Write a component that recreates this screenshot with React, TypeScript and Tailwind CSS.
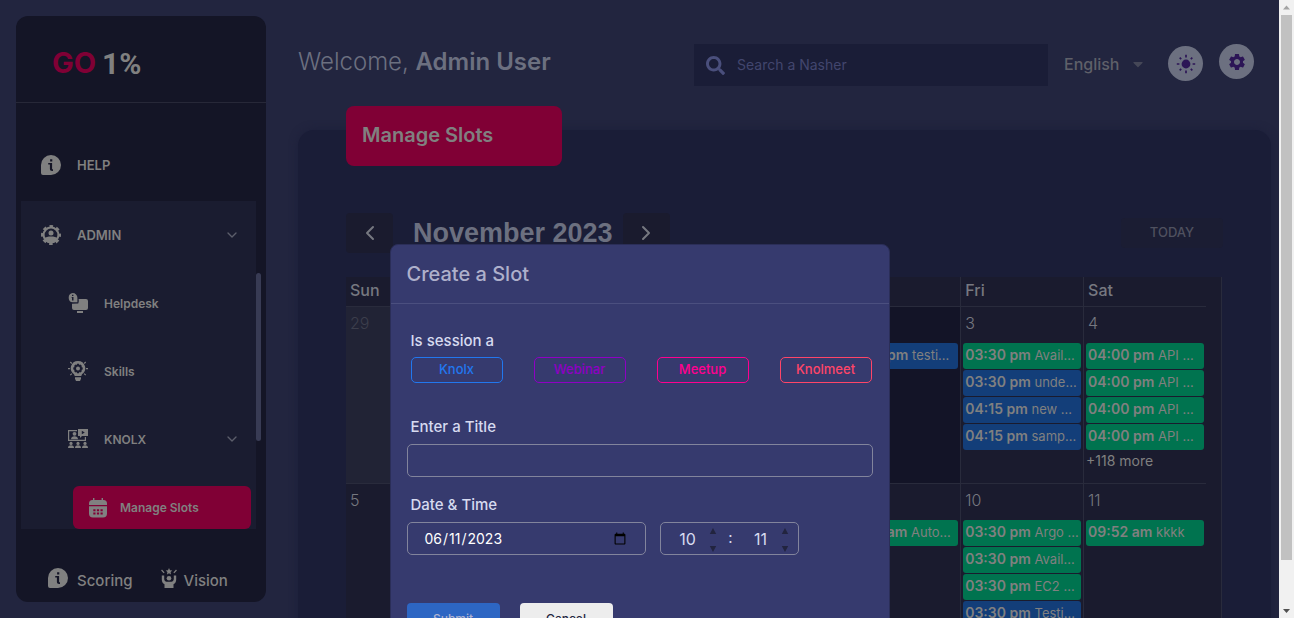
import type { ReactNode } from "react";
import { MdSettings } from "react-icons/md";
import { FaSearch, FaCaretDown } from "react-icons/fa";
import { ChevronDown, ChevronLeft, ChevronRight } from "lucide-react";

/* ---------- icons ---------- */

function InfoIcon() {
  return (
    <svg viewBox="0 0 20 20" className="size-5 shrink-0" fill="currentColor" aria-hidden="true">
      <path
        fillRule="evenodd"
        d="M10 0a10 10 0 1 1 0 20H2a2 2 0 0 1-2-2v-8A10 10 0 0 1 10 0Zm-.9 4.2v2.2h2.2V4.2H9.100Zm-1.900 3.900v1.500h1.700v4.100c0 1.500.8 2.200 2.200 2.200h.9v-1.600h-.4c-.4 0-.5-.2-.5-.6V8.100H7.200Z"
      />
    </svg>
  );
}

function AdminIcon() {
  return (
    <svg viewBox="0 0 20 20" className="size-5 shrink-0" fill="currentColor" aria-hidden="true">
      <circle cx="10" cy="10" r="7.400" fill="none" stroke="currentColor" strokeWidth="2" />
      <circle cx="10" cy="10" r="8.900" fill="none" stroke="currentColor" strokeWidth="2.200" strokeDasharray="3.600 3.390" strokeDashoffset="1.800" />
      <circle cx="10" cy="8" r="2.500" />
      <path d="M3.200 13.400c1.500-1.400 3.800-2 6.800-2s5.300.6 6.800 2c-1 3.200-3.500 4.800-6.800 4.800s-5.800-1.600-6.800-4.800Z" />
    </svg>
  );
}

function HelpdeskIcon() {
  return (
    <svg viewBox="0 0 20 20" className="size-5 shrink-0" fill="currentColor" aria-hidden="true">
      <path d="M10.600 6H18a2 2 0 0 1 2 2v7a2 2 0 0 1-2 2H6a2 2 0 0 1-2-2v-4.200l6.200-.4c.6-1.300.8-2.800.4-4.400Z" />
      <path d="M9 18h6v2H9z" />
      <path
        fillRule="evenodd"
        d="M4.700 0a4.700 4.700 0 0 1 4.700 4.700v4.600H4.700A4.700 4.700 0 0 1 4.700 0ZM4 1.800v1.300h1.400V1.800H4Zm-.4 2.100v.9H4v2.800h1.500V3.900H3.600Z"
      />
    </svg>
  );
}

function SkillsIcon() {
  return (
    <svg viewBox="0 0 20 20" className="size-5 shrink-0" fill="currentColor" aria-hidden="true">
      <path
        fillRule="evenodd"
        d="M10 0a7.200 7.200 0 0 1 4 13.200L13.300 15H6.700L6 13.200A7.200 7.200 0 0 1 10 0Zm-1 2.800-.3 1.300-1.200-.7L6 4.900l.7 1.200-1.400.3v2.200l1.400.3-.7 1.200 1.500 1.500 1.200-.7.300 1.300h2l.3-1.300 1.200.7 1.500-1.500-.7-1.200 1.400-.3V6.400l-1.400-.3.7-1.200-1.500-1.500-1.200.7L11 2.800H9Z"
      />
      <circle cx="10" cy="7.500" r="2" />
      <path d="M7 16.300h6v1.500l-1 2.200H8l-1-2.200z" />
      <path d="M0 7h2v1.200H0zM18 7h2v1.200h-2zM2.700.6l1.500 1.500-.8.800L1.900 1.400zM17.300.6l.8.8-1.500 1.500-.8-.8zM3.400 12.300l.8.800-1.500 1.500-.8-.8zM16.600 12.300l1.500 1.500-.8.800-1.500-1.500z" />
    </svg>
  );
}

function ClassIcon() {
  return (
    <svg viewBox="0 0 20 20" className="size-5 shrink-0" fill="currentColor" aria-hidden="true">
      <path d="M0 1h9v1.200H1.200v8.600h15.600V8H18v4H0z" />
      <path fillRule="evenodd" d="M10 0h10v7h-6l-2 2V7h-2V0Zm3.800 1.700v3.600l3-1.800-3-1.800Z" />
      <circle cx="6.500" cy="4.800" r="1.900" />
      <path d="M3 10.200c0-2 1.500-3 3.500-3s3.500 1 3.500 3z" />
      <circle cx="3" cy="14.400" r="1.600" />
      <circle cx="10" cy="14.400" r="1.600" />
      <circle cx="17" cy="14.400" r="1.600" />
      <path d="M0 19c0-1.900 1-2.800 3-2.800s3 .9 3 2.800zM7 19c0-1.900 1-2.800 3-2.800s3 .9 3 2.800zM14 19c0-1.900 1-2.800 3-2.800s3 .9 3 2.800z" />
    </svg>
  );
}

function CalendarIcon() {
  return (
    <svg viewBox="0 0 18 20" className="h-5 w-[18px] shrink-0" fill="currentColor" aria-hidden="true">
      <path d="M4 0h1.400v2h7.200V0H14v2h.5A3.500 3.500 0 0 1 18 5.500V7H0V5.500A3.500 3.500 0 0 1 3.500 2H4z" />
      <path
        fillRule="evenodd"
        d="M0 8.300h18v7.200a4 4 0 0 1-4 4H4a4 4 0 0 1-4-4V8.300Zm4.300 2.900v2h2.200v-2H4.300Zm3.600 0v2h2.200v-2H7.900Zm3.600 0v2h2.200v-2h-2.200Zm-7.200 3.300v2h2.200v-2H4.300Zm3.600 0v2h2.200v-2H7.900Zm3.600 0v2h2.200v-2h-2.200Z"
      />
    </svg>
  );
}

function VisionIcon() {
  return (
    <svg viewBox="0 0 16 20" className="h-5 w-4 shrink-0" fill="currentColor" aria-hidden="true">
      <path d="m8 0 1 2.200 2.300.3-1.700 1.600.4 2.400-2-1.200-2 1.200.4-2.400-1.700-1.600L7 2.200z" />
      <circle cx="8" cy="10.200" r="2.300" />
      <path d="M.8 7.500h2.400v3.200c0 1.800 1 2.700 2.400 3h4.800c1.400-.3 2.400-1.200 2.400-3V7.500h2.400v4c0 2.400-1 3.800-2.700 4.800V20h-9v-3.700C1.800 15.300.8 13.900.8 11.500z" />
      <path d="M1 1.600 3.600 4.400l-.9.800L.1 2.400zM15 1.600l.9.800-2.600 2.800-.9-.8z" />
    </svg>
  );
}

function SunIcon() {
  return (
    <svg viewBox="0 0 20 20" className="size-5" aria-hidden="true">
      <circle cx="10" cy="10" r="4.400" fill="currentColor" />
      <path
        d="M10 .8v2.600M10 16.600v2.600M.8 10h2.600M16.600 10h2.600M3.700 3.700l1.500 1.500M14.800 14.800l1.500 1.500M16.300 3.700l-1.500 1.500M5.200 14.800l-1.500 1.500"
        stroke="currentColor"
        strokeWidth="1.700"
        fill="none"
      />
    </svg>
  );
}

/* ---------- sidebar ---------- */

type NavRowProps = { icon: ReactNode; label: string; sub?: boolean; expandable?: boolean };

function NavRow({ icon, label, sub, expandable }: NavRowProps) {
  return (
    <a
      href="#"
      className={
        sub
          ? "flex h-[68px] items-center gap-4 pr-4 pl-[47px] text-xs font-semibold"
          : "flex h-[68px] items-center gap-4 pr-4 pl-5 text-[13px] font-semibold"
      }
    >
      {icon}
      <span className="pt-px">{label}</span>
      {expandable && <ChevronDown className="ml-auto size-4 text-[#5c5e6b]" />}
    </a>
  );
}

function Sidebar() {
  return (
    <aside className="m-4 mr-0 flex w-[250px] shrink-0 flex-col rounded-xl bg-[#141526] text-[#808080]">
      <div className="flex h-[87px] items-center gap-[6px] border-b border-[#272838] pt-2 pl-9">
        <span className="text-[29px] font-bold text-[#800035]">GO</span>
        <span className="font-['Roboto',sans-serif] text-[30px] font-bold">1%</span>
      </div>
      <nav className="flex min-h-0 flex-1 flex-col pt-7">
        <div className="pb-[2px] pl-[5px]">
          <NavRow icon={<InfoIcon />} label="HELP" />
        </div>
        <div className="flex h-[328px] pl-[5px]">
          <div className="w-[235px] overflow-hidden bg-[#1a1c30]">
            <NavRow icon={<AdminIcon />} label="ADMIN" expandable />
            <NavRow icon={<HelpdeskIcon />} label="Helpdesk" sub />
            <NavRow icon={<SkillsIcon />} label="Skills" sub />
            <NavRow icon={<ClassIcon />} label="KNOLX" sub expandable />
            <a
              href="#"
              className="mt-[13px] mr-[5px] ml-[52px] flex h-[43px] items-center gap-[13px] rounded-md bg-[#800035] pl-4 text-xs font-semibold"
            >
              <CalendarIcon />
              Manage Slots
            </a>
          </div>
          <div className="mt-[72px] h-[168px] w-[5px] rounded-full bg-[#383b54]" />
        </div>
      </nav>
      <div className="flex h-[73px] items-center gap-7 pt-6 pl-8 text-[15px] font-medium">
        <a href="#" className="flex items-center gap-[9px]">
          <InfoIcon />
          <span className="pt-2">Scoring</span>
        </a>
        <a href="#" className="flex items-center gap-[7px]">
          <VisionIcon />
          <span className="pt-2">Vision</span>
        </a>
      </div>
    </aside>
  );
}

/* ---------- top bar ---------- */

function TopBar() {
  return (
    <header className="flex h-[106px] items-start pt-11 pr-[17px]">
      <h1 className="text-2xl leading-9 font-light whitespace-nowrap text-[#6c7080]">
        Welcome, <span className="font-semibold">Admin User</span>
      </h1>
      <label className="ml-auto flex h-[42px] w-[354px] items-center gap-3 bg-[#1a1d37] px-3 text-[#4a4f7c]">
        <FaSearch className="size-[19px]" />
        <span className="sr-only">Search</span>
        <input
          type="search"
          placeholder="Search a Nasher"
          className="min-w-0 flex-1 bg-transparent text-sm outline-none placeholder:text-[#42466e]"
        />
      </label>
      <div className="ml-4 flex h-10 w-[82px] items-center">
        <select
          aria-label="Language"
          className="w-[68px] appearance-none bg-transparent font-medium text-[#5f6069] outline-none"
        >
          <option>English</option>
        </select>
        <FaCaretDown className="size-4 shrink-0 text-[#454757]" />
      </div>
      <div className="ml-[22px] flex gap-4 text-[#2c1556]">
        <button
          type="button"
          aria-label="Toggle theme"
          className="mt-[2px] flex size-[35px] items-center justify-center rounded-full bg-[#6c7080]"
        >
          <SunIcon />
        </button>
        <button
          type="button"
          aria-label="Settings"
          className="flex size-[35px] items-center justify-center rounded-full bg-[#6c7080]"
        >
          <MdSettings className="size-5" />
        </button>
      </div>
    </header>
  );
}

/* ---------- calendar ---------- */

type Slot = { time: string; title: string; tone: "green" | "blue" };
type Day = { date: number; slots: Slot[]; more?: number; state?: "outside" | "past" };

const weekdays = ["Sun", "Mon", "Tue", "Wed", "Thu", "Fri", "Sat"];

const weeks: Day[][] = [
  [
    { date: 29, slots: [], state: "outside" },
    { date: 30, slots: [], state: "outside" },
    { date: 31, slots: [], state: "outside" },
    { date: 1, slots: [] },
    { date: 2, slots: [{ time: "04:30 pm", title: "testing slots", tone: "blue" }], state: "past" },
    {
      date: 3,
      slots: [
        { time: "03:30 pm", title: "Available", tone: "green" },
        { time: "03:30 pm", title: "understanding", tone: "blue" },
        { time: "04:15 pm", title: "new nashers", tone: "blue" },
        { time: "04:15 pm", title: "sample slot", tone: "blue" },
      ],
    },
    {
      date: 4,
      more: 118,
      slots: [
        { time: "04:00 pm", title: "API Automation", tone: "green" },
        { time: "04:00 pm", title: "API Automation", tone: "green" },
        { time: "04:00 pm", title: "API Automation", tone: "green" },
        { time: "04:00 pm", title: "API Automation", tone: "green" },
      ],
    },
  ],
  [
    { date: 5, slots: [] },
    { date: 6, slots: [] },
    { date: 7, slots: [] },
    { date: 8, slots: [] },
    { date: 9, slots: [{ time: "09:30 am", title: "Automation", tone: "green" }] },
    {
      date: 10,
      slots: [
        { time: "03:30 pm", title: "Argo workflows", tone: "green" },
        { time: "03:30 pm", title: "Available", tone: "green" },
        { time: "03:30 pm", title: "EC2 overview", tone: "green" },
        { time: "03:30 pm", title: "Testing", tone: "blue" },
      ],
    },
    { date: 11, slots: [{ time: "09:52 am", title: "kkkk", tone: "green" }] },
  ],
];

function SlotChip({ slot }: { slot: Slot }) {
  return (
    <a
      href="#"
      className={
        slot.tone === "green"
          ? "block h-[26px] truncate rounded-[3px] bg-[#00734f] px-[2px] text-[13px] leading-6"
          : "block h-[26px] truncate rounded-[3px] bg-[#133e79] px-[2px] text-[13px] leading-6"
      }
    >
      <b className="text-sm leading-6 font-semibold">{slot.time}</b> {slot.title}
    </a>
  );
}

const dayTone = {
  normal: "h-[177px] border-l border-b border-[#292b3c] p-0 align-top first:border-l-0",
  outside: "h-[177px] border-l border-b border-[#292b3c] bg-[#212335] p-0 align-top text-[#3c3e4c] first:border-l-0",
  past: "h-[177px] border-l border-b border-[#292b3c] bg-[#131427] p-0 align-top first:border-l-0",
};

function Calendar() {
  return (
    <div className="mt-6 mr-px border-r border-[#292b3c] bg-[#1a1b2e] pr-[15px] text-[#767880]">
      <table className="w-full table-fixed border-separate border-spacing-0">
        <thead>
          <tr>
            {weekdays.map((d) => (
              <th
                key={d}
                className="h-[30px] border-b border-l border-[#292b3c] px-1 pt-0 pb-[3px] text-left font-medium first:border-l-0"
              >
                {d}
              </th>
            ))}
          </tr>
        </thead>
        <tbody>
          {weeks.map((week, i) => (
            <tr key={i}>
              {week.map((day) => (
                <td key={day.date} className={dayTone[day.state ?? "normal"]}>
                  <div className="h-9 px-1 pt-1 leading-6 font-light">{day.date}</div>
                  <div className="flex flex-col gap-px px-[2px] text-[#808080]">
                    {day.slots.map((s, j) => (
                      <SlotChip key={j} slot={s} />
                    ))}
                    {day.more && (
                      <a href="#" className="text-sm leading-5">
                        +{day.more} more
                      </a>
                    )}
                  </div>
                </td>
              ))}
            </tr>
          ))}
        </tbody>
      </table>
    </div>
  );
}

function SlotsCard() {
  return (
    <section className="flex flex-col rounded-2xl bg-[#1a1d37] px-12 shadow-[0_0_8px_#1c1f3a]">
      <h2 className="-mt-6 h-[60px] w-[216px] rounded-lg bg-[#800035] px-4 text-xl leading-[58px] font-semibold text-[#808080]">
        Manage Slots
      </h2>
      <div className="mt-[47px] flex h-10 items-center">
        <button
          type="button"
          aria-label="Previous month"
          className="flex h-10 w-[47px] items-center justify-center rounded bg-[#1a1b2e] text-[#767880]"
        >
          <ChevronLeft className="size-6" />
        </button>
        <h3 className="mr-[10px] ml-5 flex-none font-['Liberation_Sans',sans-serif] text-[27px] leading-9 font-bold text-[#6c7080]">
          November 2023
        </h3>
        <button
          type="button"
          aria-label="Next month"
          className="flex h-10 w-[47px] items-center justify-center rounded bg-[#1a1b2e] text-[#767880]"
        >
          <ChevronRight className="size-6" />
        </button>
        <button
          type="button"
          className="ml-auto h-[30px] w-[102px] rounded bg-[#1b1d33] text-[13px] font-medium text-[#4f515f]"
        >
          TODAY
        </button>
      </div>
      <Calendar />
    </section>
  );
}

/* ---------- dialog ---------- */

function Spinner({ label, value }: { label: string; value: number }) {
  return (
    <span className="flex items-center">
      <input
        type="number"
        aria-label={label}
        defaultValue={value}
        className="w-8 [appearance:textfield] bg-transparent text-center text-base outline-none [&::-webkit-inner-spin-button]:appearance-none"
      />
      <span className="ml-[5px] flex flex-col justify-between gap-[10px] pt-[2px] text-[#22243f]">
        <button type="button" aria-label={`Increase ${label}`} className="block">
          <svg viewBox="0 0 8 8" className="size-2" fill="currentColor" aria-hidden="true">
            <path d="M4 1 7.200 7H.8z" />
          </svg>
        </button>
        <button type="button" aria-label={`Decrease ${label}`} className="block">
          <svg viewBox="0 0 8 8" className="size-2" fill="currentColor" aria-hidden="true">
            <path d="M4 7 .8 1h6.400z" />
          </svg>
        </button>
      </span>
    </span>
  );
}

function SlotDialog() {
  return (
    <div className="absolute inset-0 flex items-start justify-center overflow-hidden pt-[244px]">
      <form
        role="dialog"
        aria-labelledby="dialog-title"
        className="w-[500px] rounded-lg border border-[#2b2e58] bg-[#363a6e] text-[15px] text-[#d7daf0]"
      >
        <h2
          id="dialog-title"
          className="h-[59px] border-b border-[#4b4f7f] px-4 text-xl leading-[58px] font-medium text-[#aeb0cb]"
        >
          Create a Slot
        </h2>
        <div className="px-4 pt-[25px]">
          <fieldset className="pr-px pl-1">
            <legend className="mb-1 leading-6 font-medium">Is session a</legend>
            <div className="flex justify-between text-[13px] font-medium">
              <button type="button" className="h-[26px] w-[92px] rounded-[5px] border border-[#2277ee] text-[#2277ee]">
                Knolx
              </button>
              <button type="button" className="h-[26px] w-[92px] rounded-[5px] border border-[#8f00c4] text-[#8f00c4]">
                Webinar
              </button>
              <button type="button" className="h-[26px] w-[92px] rounded-[5px] border border-[#ff0090] text-[#ff0090]">
                Meetup
              </button>
              <button type="button" className="h-[26px] w-[92px] rounded-[5px] border border-[#ff4568] text-[#ff4568]">
                Knolmeet
              </button>
            </div>
          </fieldset>
          <div className="mt-8">
            <label htmlFor="slot-title" className="block px-1 leading-6 font-medium">
              Enter a Title
            </label>
            <input
              id="slot-title"
              type="text"
              className="mt-[5px] block h-[33px] w-full rounded-[5px] border border-[#82849c] bg-transparent px-4 outline-none"
            />
          </div>
          <div className="mt-4">
            <label htmlFor="slot-date" className="block px-1 leading-6 font-medium">
              Date &amp; Time
            </label>
            <div className="mt-[5px] flex gap-[14px]">
              <input
                id="slot-date"
                type="date"
                defaultValue="2023-06-11"
                className="h-[33px] w-[239px] rounded-[5px] border border-[#82849c] bg-transparent px-4 text-sm text-white outline-none"
              />
              <div className="flex h-[33px] w-[139px] items-center justify-between rounded-[5px] border border-[#82849c] pr-2 pl-[11px]">
                <Spinner label="hour" value={10} />
                <span>:</span>
                <Spinner label="minute" value={11} />
              </div>
            </div>
          </div>
          <div className="mt-12 flex gap-5 pb-6 text-xs font-medium">
            <button type="submit" className="h-8 w-[93px] rounded bg-[#2d66c3] text-[#afb3d0]">
              Submit
            </button>
            <button type="button" className="h-8 w-[93px] rounded bg-[#ededed] text-[#22243f]">
              Cancel
            </button>
          </div>
        </div>
      </form>
    </div>
  );
}

function PageScrollbar() {
  return (
    <div className="flex w-[15px] shrink-0 flex-col items-center bg-[#f1f1f1]" aria-hidden="true">
      <svg viewBox="0 0 15 15" className="size-[15px]" fill="#a3a3a3">
        <path d="M7.500 5.500 11 9.500H4z" />
      </svg>
      <div className="w-[11px] flex-[545] bg-[#c1c1c1]" />
      <div className="flex-[43]" />
      <svg viewBox="0 0 15 15" className="size-[15px]" fill="#505050">
        <path d="M7.500 10 11 6H4z" />
      </svg>
    </div>
  );
}

export default function App() {
  return (
    <div className="flex h-screen overflow-hidden bg-[#22253f] font-['Inter',sans-serif]">
      <div className="relative flex min-w-0 flex-1 overflow-hidden">
        <Sidebar />
        <main className="min-w-0 flex-1 pr-2 pl-8">
          <TopBar />
          <div className="pt-6">
            <SlotsCard />
          </div>
        </main>
        <SlotDialog />
      </div>
      <PageScrollbar />
    </div>
  );
}
